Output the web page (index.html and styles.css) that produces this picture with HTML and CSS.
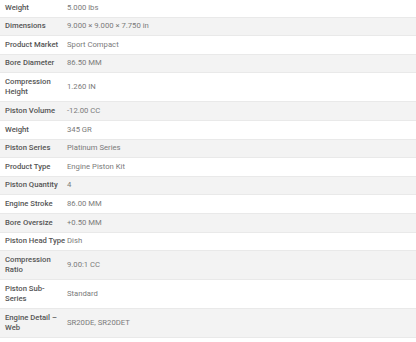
FILE: index.html
```html
<!DOCTYPE html>
<html>
<head>
<meta charset="utf-8">
<link rel="stylesheet" href="styles.css">
</head>
<body>
<table class="specs">
<tbody>
<tr><th>Weight</th><td>5.000 lbs</td></tr>
<tr><th>Dimensions</th><td>9.000 × 9.000 × 7.750 in</td></tr>
<tr><th>Product Market</th><td>Sport Compact</td></tr>
<tr><th>Bore Diameter</th><td>86.50 MM</td></tr>
<tr><th>Compression Height</th><td>1.260 IN</td></tr>
<tr><th>Piston Volume</th><td>-12.00 CC</td></tr>
<tr><th>Weight</th><td>345 GR</td></tr>
<tr><th>Piston Series</th><td>Platinum Series</td></tr>
<tr><th>Product Type</th><td>Engine Piston Kit</td></tr>
<tr><th>Piston Quantity</th><td>4</td></tr>
<tr><th>Engine Stroke</th><td>86.00 MM</td></tr>
<tr><th>Bore Oversize</th><td>+0.50 MM</td></tr>
<tr><th>Piston Head Type</th><td>Dish</td></tr>
<tr><th>Compression Ratio</th><td>9.00:1 CC</td></tr>
<tr><th>Piston Sub-Series</th><td>Standard</td></tr>
<tr><th>Engine Detail – Web</th><td>SR20DE, SR20DET</td></tr>
</tbody>
</table>
</body>
</html>
```
FILE: styles.css
```css
html, body {
  margin: 0;
  padding: 0;
  background: #ffffff;
}
.specs {
  width: 100%;
  border-collapse: collapse;
  font-family: Roboto, "Noto Sans", sans-serif;
  font-size: 7.7px;
  line-height: 10.4px;
  margin-top: -1px;
}
.specs tr {
  border-bottom: 1px solid #e9e9e9;
}
.specs tr:nth-child(even) {
  background: #f3f3f3;
}
.specs th {
  text-align: left;
  font-weight: 500;
  color: #555555;
  width: 61px;
  padding: 3.6px 0 3.6px 5px;
  vertical-align: middle;
}
.specs td {
  color: #7a7a7a;
  padding: 3.6px 5px 3.6px 1px;
  vertical-align: middle;
}
```
